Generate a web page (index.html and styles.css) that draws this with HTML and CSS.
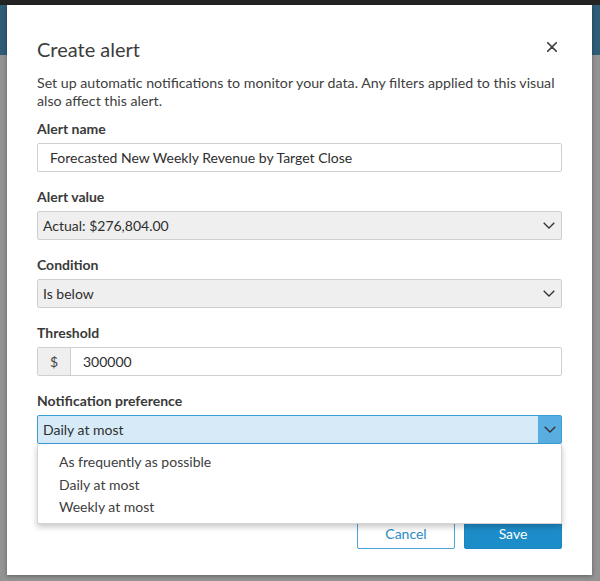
FILE: index.html
```html
<!DOCTYPE html>
<html lang="en">
<head>
<meta charset="utf-8">
<title>Create alert</title>
<link rel="stylesheet" href="styles.css">
</head>
<body>
<div class="app">
  <div class="topbar"></div>
  <div class="band"></div>
  <div class="rest"></div>
</div>
<div class="modal" role="dialog" aria-labelledby="dlg-title">
  <div class="modal-head">
    <h1 id="dlg-title" class="modal-title">Create alert</h1>
    <button class="close" aria-label="Close">
      <svg width="10" height="10" viewBox="0 0 10 10"><path d="M0.6 0.6 L9.4 9.4 M9.4 0.6 L0.6 9.4" stroke="#444" stroke-width="1.5" fill="none" stroke-linecap="round"/></svg>
    </button>
  </div>
  <p class="desc">Set up automatic notifications to monitor your data. Any filters applied to this visual also affect this alert.</p>

  <div class="field field-first">
    <div class="label">Alert name</div>
    <div class="control input">Forecasted New Weekly Revenue by Target Close</div>
  </div>

  <div class="field">
    <div class="label">Alert value</div>
    <div class="control select">
      <span class="select-text">Actual: $276,804.00</span>
      <span class="chev"><svg width="12" height="7" viewBox="0 0 12 7"><path d="M0.7 0.7 L6 6 L11.3 0.7" stroke="#333" stroke-width="1.3" fill="none"/></svg></span>
    </div>
  </div>

  <div class="field">
    <div class="label">Condition</div>
    <div class="control select">
      <span class="select-text">Is below</span>
      <span class="chev"><svg width="12" height="7" viewBox="0 0 12 7"><path d="M0.7 0.7 L6 6 L11.3 0.7" stroke="#333" stroke-width="1.3" fill="none"/></svg></span>
    </div>
  </div>

  <div class="field">
    <div class="label">Threshold</div>
    <div class="control group">
      <span class="addon">$</span>
      <span class="group-input">300000</span>
    </div>
  </div>

  <div class="field field-open">
    <div class="label">Notification preference</div>
    <div class="control select focused">
      <span class="select-text">Daily at most</span>
      <span class="chev chev-btn"><svg width="12" height="7" viewBox="0 0 12 7"><path d="M0.7 0.7 L6 6 L11.3 0.7" stroke="#333" stroke-width="1.3" fill="none"/></svg></span>
    </div>
    <ul class="menu">
      <li>As frequently as possible</li>
      <li>Daily at most</li>
      <li>Weekly at most</li>
    </ul>
  </div>

  <div class="footer">
    <button class="btn btn-cancel">Cancel</button>
    <button class="btn btn-save">Save</button>
  </div>
</div>
</body>
</html>
```

FILE: styles.css
```css
* { box-sizing: border-box; }
html, body { margin: 0; padding: 0; }
body {
  width: 600px;
  height: 581px;
  overflow: hidden;
  font-family: "Lato", "Liberation Sans", sans-serif;
  background: #929292;
  position: relative;
}
.app { height: 581px; display: flex; flex-direction: column; }
.topbar { height: 5px; background: #232323; }
.band { height: 50px; background: #2f5c77; }
.rest { flex: 1; background: #939393; }

.modal {
  position: absolute;
  left: 7px;
  top: 5px;
  width: 585px;
  height: 570px;
  background: #fff;
  padding: 32px 30px 0 30px;
  box-shadow: 0 1px 4px rgba(0,0,0,0.35);
  color: #404040;
}
.modal-head { display: flex; justify-content: space-between; align-items: flex-start; }
.modal-title {
  margin: 0;
  font-size: 20px;
  line-height: 24px;
  font-weight: normal;
  color: #3c3c3c;
}
.close {
  border: 0; background: none; padding: 0;
  margin-top: 5px; margin-right: 5px;
  width: 10px; height: 10px; display: flex;
}
.desc {
  margin: 13px 0 0 0;
  font-size: 14.2px;
  line-height: 18px;
  color: #404040;
}
.field { margin-top: 16px; }
.field-first { margin-top: 10px; }
.label {
  font-size: 14px;
  line-height: 18px;
  font-weight: bold;
  color: #3a3a3a;
}
.control {
  margin-top: 5px;
  height: 29px;
  border: 1px solid #cfcfcf;
  border-radius: 2px;
  font-size: 14px;
  color: #2e2e2e;
  display: flex;
  align-items: center;
}
.input { padding-left: 12px; background: #fff; }
.select { background: #efefef; padding-left: 5px; justify-content: space-between; }
.select-text { flex: 1; }
.chev { width: 23px; align-self: stretch; display: flex; align-items: center; justify-content: center; margin-right: 1px; }
.group { background: #fff; }
.addon {
  width: 33px; align-self: stretch;
  background: #efefef; border-right: 1px solid #cfcfcf;
  display: flex; align-items: center; justify-content: center;
  color: #444;
}
.group-input { padding-left: 12px; }

.field-open { position: relative; }
.focused { background: #d6ebf7; border-color: #3b9dd6; }
.chev-btn { background: #59aee1; margin-right: 0; }
.menu {
  position: absolute;
  left: 0; right: 0;
  top: 100%;
  margin: 0;
  list-style: none;
  background: #fff;
  border: 1px solid #d4d4d4;
  border-top: 0;
  padding: 7px 0 4px 21px;
  box-shadow: 0 3px 6px rgba(0,0,0,0.22);
  z-index: 2;
  font-size: 14px;
  color: #404040;
}
.menu li { line-height: 22.5px; }

.footer {
  display: flex;
  justify-content: flex-end;
  gap: 9px;
  margin-top: 74px;
}
.btn {
  width: 98px;
  height: 31px;
  border-radius: 2px;
  font-family: inherit;
  font-size: 14px;
  cursor: pointer;
}
.btn-cancel { background: #fff; border: 1px solid #4aa3d6; color: #2a89c3; }
.btn-save { background: #1d8dc9; border: 1px solid #1a86c0; color: #fff; }
```
